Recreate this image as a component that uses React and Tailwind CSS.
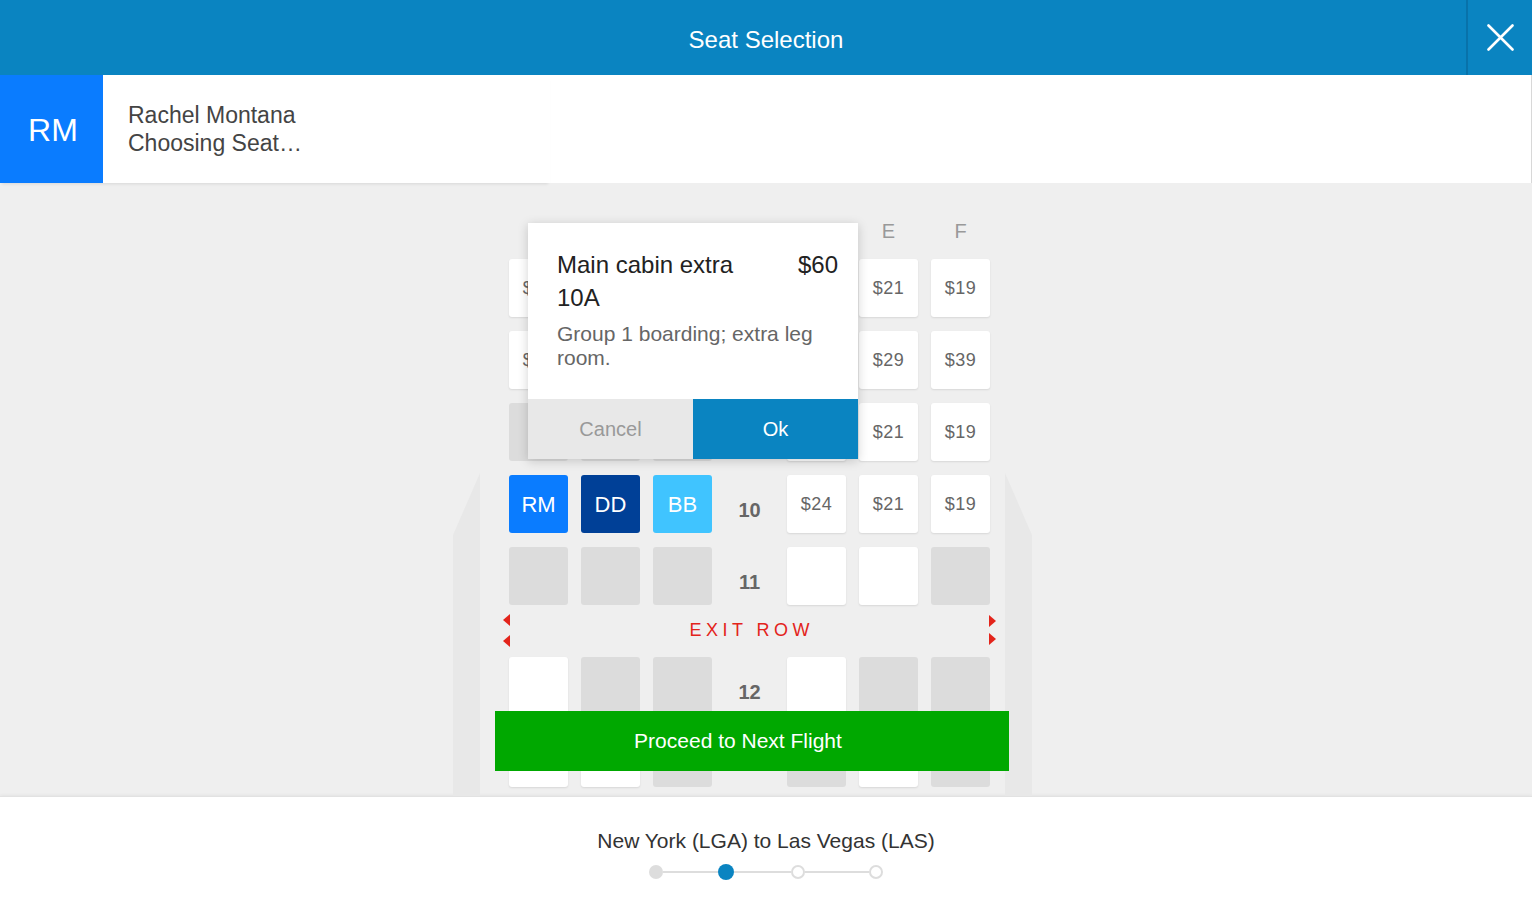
const ROWS = [
  { n: 7, seats: ["$29", "$29", "$29", "$24", "$21", "$19"] },
  { n: 8, seats: ["$29", "$29", "$29", "$29", "$29", "$39"] },
  { n: 9, seats: ["x", "x", "x", "$24", "$21", "$19"] },
  { n: 10, seats: ["RM", "DD", "BB", "$24", "$21", "$19"] },
  { n: 11, seats: ["x", "x", "x", "", "", "x"] },
  { exit: true },
  { n: 12, seats: ["", "x", "x", "", "x", "x"] },
  { n: 13, seats: ["", "", "x", "x", "", "x"] },
];

const TAKEN = {
  RM: "bg-[#0a7cff]",
  DD: "bg-[#004097]",
  BB: "bg-[#40c4ff]",
};

function Seat({ value }) {
  if (value === "x") {
    return <div className="h-[58px] rounded-[3px] bg-[#dcdcdc]" />;
  }
  if (TAKEN[value]) {
    return (
      <div
        className={`flex h-[58px] items-center justify-center rounded-[3px] text-[22px] text-white ${TAKEN[value]}`}
      >
        {value}
      </div>
    );
  }
  return (
    <div className="flex h-[58px] items-center justify-center rounded-[3px] bg-white text-[18px] tracking-[0.5px] text-[#666] shadow-[0_1px_2px_rgba(0,0,0,0.1)]">
      {value}
    </div>
  );
}

function Arrow({ dir }) {
  return (
    <svg width="7" height="12" viewBox="0 0 7 12">
      {dir === "left" ? (
        <polygon points="7,0 7,12 0,6" fill="#e3241b" />
      ) : (
        <polygon points="0,0 0,12 7,6" fill="#e3241b" />
      )}
    </svg>
  );
}

function SeatMap() {
  return (
    <div className="relative ml-[453px] flex h-full w-[579px]">
      <div className="flex w-[27px] flex-col pt-[290px]">
        <div className="flex-1 bg-[#e8e8e8] [clip-path:polygon(100%_0,100%_100%,0_100%,0_62px)]" />
      </div>

      <div className="w-[525px] overflow-hidden pl-[29px] pt-[34px]">
        <div className="grid grid-cols-[59px_59px_59px_49px_59px_59px_59px] gap-x-[13px] gap-y-[14px]">
          {["A", "B", "C", "", "D", "E", "F"].map((c, i) => (
            <div
              key={i}
              className="flex h-[28px] items-center justify-center text-[20px] text-[#999]"
            >
              {c}
            </div>
          ))}

          {ROWS.map((row, i) =>
            row.exit ? (
              <div
                key={i}
                className="col-span-7 -mx-[6px] -mt-[2px] flex h-[26px] items-center justify-between"
              >
                <div className="flex flex-col gap-[9px]">
                  <Arrow dir="left" />
                  <Arrow dir="left" />
                </div>
                <span className="pl-[0.25em] text-[18px] tracking-[0.25em] text-[#e3241b]">
                  EXIT ROW
                </span>
                <div className="flex flex-col gap-[6px]">
                  <Arrow dir="right" />
                  <Arrow dir="right" />
                </div>
              </div>
            ) : (
              [
                ...row.seats.slice(0, 3).map((s, j) => <Seat key={`${i}-${j}`} value={s} />),
                <div
                  key={`${i}-n`}
                  className="flex h-[58px] items-center justify-center pt-3 text-[20px] font-bold text-[#666]"
                >
                  {row.n}
                </div>,
                ...row.seats.slice(3).map((s, j) => <Seat key={`${i}-${j + 3}`} value={s} />),
              ]
            )
          )}
        </div>
      </div>

      <div className="flex w-[27px] flex-col pt-[290px]">
        <div className="flex-1 bg-[#e8e8e8] [clip-path:polygon(0_0,100%_62px,100%_100%,0_100%)]" />
      </div>

      {/* seat detail popover */}
      <div className="absolute left-[75px] top-[40px] w-[330px] bg-white shadow-[0_2px_10px_rgba(0,0,0,0.18)]">
        <div className="h-[176px] pl-[29px] pr-[20px] pt-[25px]">
          <div className="flex justify-between text-[24px] leading-[33px] text-[#222]">
            <span>Main cabin extra</span>
            <span>$60</span>
          </div>
          <div className="text-[24px] leading-[33px] text-[#222]">10A</div>
          <p className="mt-2 text-[21px] leading-[24px] text-[#666]">
            Group 1 boarding; extra leg room.
          </p>
        </div>
        <div className="flex h-[60px]">
          <button
            type="button"
            className="flex-1 bg-[#e8e8e8] text-[20px] text-[#999]"
          >
            Cancel
          </button>
          <button
            type="button"
            className="flex-1 bg-[#0a84c1] text-[20px] text-white"
          >
            Ok
          </button>
        </div>
      </div>

      <button
        type="button"
        className="absolute left-[42px] top-[528px] h-[60px] w-[514px] bg-[#00a800] pr-[28px] text-[21px] text-white"
      >
        Proceed to Next Flight
      </button>
    </div>
  );
}

export default function App() {
  return (
    <div className="flex h-screen flex-col overflow-hidden bg-[#efefef] font-['Liberation_Sans',Arial,sans-serif]">
      <div className="flex h-[75px] shrink-0 bg-[#0a84c1]">
        <div className="flex flex-1 items-center justify-center pl-[66px] pt-1 text-[24px] text-white">
          Seat Selection
        </div>
        <button
          type="button"
          className="flex w-[66px] items-center justify-center border-l-2 border-[#0872aa]"
        >
          <svg width="27" height="27" viewBox="0 0 27 27">
            <path
              d="M1.5 1.5 L25.5 25.5 M25.5 1.5 L1.5 25.5"
              stroke="white"
              strokeWidth="2.6"
              strokeLinecap="round"
            />
          </svg>
        </button>
      </div>

      <div className="relative z-10 flex h-[108px] shrink-0 bg-white">
        <div className="flex w-[550px] shadow-[0_3px_3px_-2px_rgba(0,0,0,0.1)]">
          <div className="flex w-[103px] items-center justify-center bg-[#0a7cff] pl-[3px] pt-[2px] text-[32px] text-white">
            RM
          </div>
          <div className="flex flex-col justify-center pl-[25px] text-[23px] leading-[28px] text-[#444]">
            <span>Rachel Montana</span>
            <span>Choosing Seat…</span>
          </div>
        </div>
        <div className="flex-1 border-r border-[#d8d8d8]" />
      </div>

      <div className="min-h-0 flex-1 overflow-hidden">
        <SeatMap />
      </div>

      <div className="flex h-[116px] shrink-0 flex-col items-center border-t border-[#e2e2e2] bg-white pt-[32px] shadow-[0_-1px_3px_rgba(0,0,0,0.05)]">
        <div className="text-[21px] leading-[24px] text-[#333]">
          New York (LGA) to Las Vegas (LAS)
        </div>
        <div className="mt-[11px] flex items-center">
          <span className="h-[14px] w-[14px] rounded-full bg-[#dddddd]" />
          <span className="h-[2px] w-[55px] bg-[#dddddd]" />
          <span className="h-[16px] w-[16px] rounded-full bg-[#0a84c1]" />
          <span className="h-[2px] w-[57px] bg-[#dddddd]" />
          <span className="h-[14px] w-[14px] rounded-full border-2 border-[#dddddd] bg-white" />
          <span className="h-[2px] w-[64px] bg-[#dddddd]" />
          <span className="h-[14px] w-[14px] rounded-full border-2 border-[#dddddd] bg-white" />
        </div>
      </div>
    </div>
  );
}
